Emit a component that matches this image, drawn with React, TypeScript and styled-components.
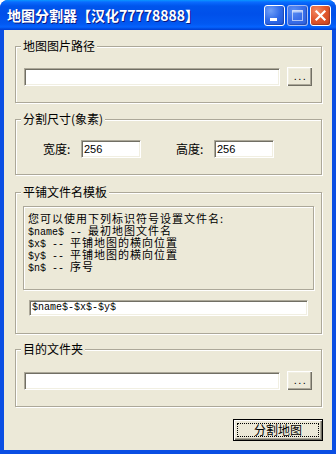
import React from 'react';
import styled, { createGlobalStyle } from 'styled-components';

const Global = createGlobalStyle`
  html, body { margin: 0; padding: 0; background: #ffffff; }
  body { font-family: "Noto Sans CJK SC", "Liberation Sans", sans-serif; font-size: 12px; color: #000; }
  * { box-sizing: border-box; }
`;

const Window = styled.div`
  width: 336px;
  height: 454px;
  display: flex;
  flex-direction: column;
  background: #0a4ee3;
  border-radius: 8px 8px 0 0;
  overflow: hidden;
`;

const TitleBar = styled.div`
  height: 30px;
  flex: none;
  display: flex;
  align-items: center;
  padding: 0 5px 0 7px;
  background: linear-gradient(180deg, #0997ff 0, #0a6cff 2px, #0055ec 6px, #0050ea 14px, #0259f2 24px, #0563ff 27px, #0049dc 29px, #003dd7 30px);
`;

const TitleText = styled.div`
  flex: 1;
  color: #ffffff;
  font-family: "Noto Sans CJK SC", "Liberation Sans", sans-serif;
  font-weight: 700;
  font-size: 14px;
  letter-spacing: 0;
  line-height: 16px;
  text-shadow: 1px 1px 0 #0a1883;
  white-space: nowrap;
`;

const CaptionButtons = styled.div`
  display: flex;
  gap: 2px;
`;

const CapBtn = styled.div<{ $kind: 'min' | 'max' | 'close' }>`
  width: 21px;
  height: 21px;
  border-radius: 3px;
  display: flex;
  align-items: center;
  justify-content: center;
  position: relative;
  border: 1px solid ${p => (p.$kind === 'max' ? 'rgba(255,255,255,0.55)' : '#ffffff')};
  background: ${p =>
    p.$kind === 'close'
      ? 'radial-gradient(circle at 30% 25%, #f28a64 0, #e2592f 45%, #c8401a 100%)'
      : p.$kind === 'max'
      ? 'radial-gradient(circle at 30% 25%, #5b8ff4 0, #3a6ee8 50%, #2d5fe0 100%)'
      : 'radial-gradient(circle at 30% 25%, #6f9ff8 0, #2f6ae8 50%, #1f55d8 100%)'};
  box-shadow: inset -1px -1px 1px rgba(0, 0, 40, 0.25);
`;

const MinBar = styled.span`
  position: absolute;
  left: 5px;
  bottom: 4px;
  width: 7px;
  height: 3px;
  background: #ffffff;
`;

const Client = styled.div`
  flex: 1;
  margin: 0 4px 4px 4px;
  background: #ece9d8;
  display: flex;
  flex-direction: column;
  padding: 16px 10px 0 11px;
`;

const Group = styled.div<{ $mt: number; $pt: number; $pb: number; $px: number; $pr: number }>`
  position: relative;
  margin-top: ${p => p.$mt}px;
  border: 1px solid #aca899;
  box-shadow: inset 1px 1px 0 #ffffff, 1px 1px 0 #ffffff;
  padding: ${p => p.$pt}px ${p => p.$pr}px ${p => p.$pb}px ${p => p.$px}px;
  display: flex;
  flex-direction: column;
`;

const Caption = styled.span`
  position: absolute;
  top: -7px;
  left: 5px;
  padding: 0 2px;
  background: #ece9d8;
  font-size: 12px;
  line-height: 12px;
  white-space: nowrap;
`;

const Row = styled.div<{ $gap?: number }>`
  display: flex;
  align-items: center;
  gap: ${p => p.$gap ?? 7}px;
`;

const Edit = styled.div<{ $w?: number; $mono?: boolean }>`
  height: 18px;
  ${p => (p.$w ? `width: ${p.$w}px; flex: none;` : 'flex: 1;')}
  background: #ffffff;
  border-style: solid;
  border-width: 1px;
  border-color: #aca899 #ffffff #ffffff #aca899;
  box-shadow: inset 1px 1px 0 #716f64, inset -1px -1px 0 #f1efe2;
  padding: 0 2px;
  display: flex;
  align-items: center;
  font-family: ${p => (p.$mono ? '"Liberation Mono", monospace' : '"Liberation Sans", sans-serif')};
  font-size: ${p => (p.$mono ? '10px' : '11px')};
  line-height: 14px;
  white-space: nowrap;
`;

const Browse = styled.div`
  width: 25px;
  height: 19px;
  flex: none;
  background: #ece9d8;
  box-shadow: inset 1px 1px 0 #ffffff, inset -1px -1px 0 #716f64, inset -2px -2px 0 #aca899, inset 2px 2px 0 #f1efe2;
  display: flex;
  align-items: center;
  justify-content: center;
  font-family: "Liberation Sans", sans-serif;
  font-size: 11px;
  letter-spacing: 1.5px;
  padding-left: 2px;
  line-height: 11px;
`;

const Label = styled.span<{ $ml?: number }>`
  width: 30px;
  flex: none;
  margin-left: ${p => p.$ml ?? 0}px;
  font-size: 12px;
  line-height: 12px;
  white-space: nowrap;
`;

const InfoBox = styled.div`
  height: 84px;
  border: 1px solid #aca899;
  box-shadow: inset 1px 1px 0 #ffffff, 1px 1px 0 #ffffff;
  padding: 5px 4px;
  display: flex;
  flex-direction: column;
`;

const InfoLine = styled.div`
  font-size: 11px;
  letter-spacing: 1px;
  line-height: 12px;
  height: 12px;
  white-space: nowrap;
`;

const Code = styled.span`
  font-family: "Liberation Mono", monospace;
  font-size: 10px;
  letter-spacing: 0;
`;

const TemplateEdit = styled(Edit)`
  margin: 10px 6px 0 6px;
`;

const Footer = styled.div`
  display: flex;
  justify-content: flex-end;
  margin: 12px -1px 0 0;
`;

const DefaultButton = styled.div`
  width: 90px;
  height: 22px;
  border: 1px solid #000000;
  background: #ece9d8;
  box-shadow: inset 1px 1px 0 #ffffff, inset -1px -1px 0 #716f64, inset -2px -2px 0 #aca899;
  padding: 3px;
  display: flex;
`;

const FocusRect = styled.div`
  flex: 1;
  border: 1px dotted #000000;
  display: flex;
  align-items: center;
  justify-content: center;
  font-size: 12px;
  line-height: 12px;
`;

export default function App() {
  return (
    <>
      <Global />
      <Window>
        <TitleBar>
          <TitleText>地图分割器【汉化77778888】</TitleText>
          <CaptionButtons>
            <CapBtn $kind="min">
              <MinBar />
            </CapBtn>
            <CapBtn $kind="max">
              <svg width="13" height="13" viewBox="0 0 13 13">
                <rect x="1.5" y="1.5" width="10" height="10" fill="none" stroke="rgba(255,255,255,0.6)" strokeWidth="1" />
                <rect x="1.5" y="1.5" width="10" height="2" fill="rgba(255,255,255,0.6)" />
              </svg>
            </CapBtn>
            <CapBtn $kind="close">
              <svg width="13" height="13" viewBox="0 0 13 13">
                <path d="M2.5 2.5 L10.5 10.5 M10.5 2.5 L2.5 10.5" stroke="#ffffff" strokeWidth="2.2" strokeLinecap="square" />
              </svg>
            </CapBtn>
          </CaptionButtons>
        </TitleBar>
        <Client>
          <Group $mt={0} $pt={20} $pb={16} $px={8} $pr={9}>
            <Caption>地图图片路径</Caption>
            <Row>
              <Edit />
              <Browse>...</Browse>
            </Row>
          </Group>

          <Group $mt={16} $pt={20} $pb={16} $px={27} $pr={9}>
            <Caption>分割尺寸(象素)</Caption>
            <Row $gap={8}>
              <Label>宽度:</Label>
              <Edit $w={60}>256</Edit>
              <Label $ml={27}>高度:</Label>
              <Edit $w={60}>256</Edit>
            </Row>
          </Group>

          <Group $mt={17} $pt={13} $pb={17} $px={7} $pr={7}>
            <Caption>平铺文件名模板</Caption>
            <InfoBox>
              <InfoLine>您可以使用下列标识符号设置文件名:</InfoLine>
              <InfoLine><Code>$name$ -- </Code>最初地图文件名</InfoLine>
              <InfoLine><Code>$x$ -- </Code>平铺地图的横向位置</InfoLine>
              <InfoLine><Code>$y$ -- </Code>平铺地图的横向位置</InfoLine>
              <InfoLine><Code>$n$ -- </Code>序号</InfoLine>
            </InfoBox>
            <TemplateEdit $mono>$name$-$x$-$y$</TemplateEdit>
          </Group>

          <Group $mt={15} $pt={21} $pb={16} $px={8} $pr={9}>
            <Caption>目的文件夹</Caption>
            <Row>
              <Edit />
              <Browse>...</Browse>
            </Row>
          </Group>

          <Footer>
            <DefaultButton>
              <FocusRect>分割地图</FocusRect>
            </DefaultButton>
          </Footer>
        </Client>
      </Window>
    </>
  );
}
